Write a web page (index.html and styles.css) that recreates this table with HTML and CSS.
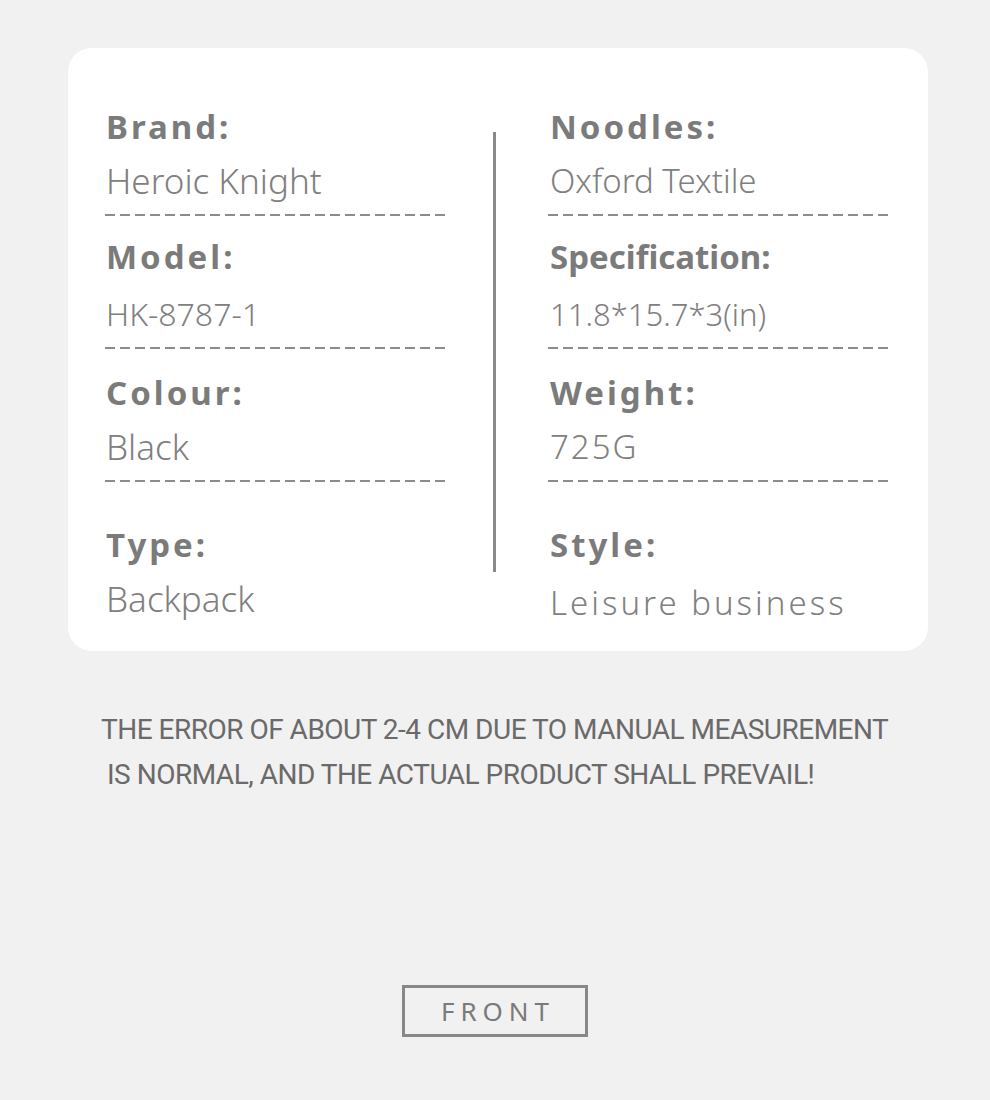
FILE: index.html
```html
<!DOCTYPE html>
<html lang="en">
<head>
    <meta charset="UTF-8">
    <meta name="viewport" content="width=device-width, initial-scale=1.0">
    <title>Product Parameters</title>
    <link rel="stylesheet" href="styles.css">
</head>
<body>
    <div class="page">
        <div class="card">
            <div class="col">
                <div class="item">
                    <div class="label spaced">Brand:</div>
                    <div class="value lg">Heroic Knight</div>
                    <div class="dash"></div>
                </div>
                <div class="item">
                    <div class="label spaced up">Model:</div>
                    <div class="value md">HK-8787-1</div>
                    <div class="dash"></div>
                </div>
                <div class="item">
                    <div class="label spaced">Colour:</div>
                    <div class="value lg">Black</div>
                    <div class="dash"></div>
                </div>
                <div class="item last">
                    <div class="label spaced">Type:</div>
                    <div class="value lg">Backpack</div>
                </div>
            </div>
            <div class="divider"></div>
            <div class="col">
                <div class="item">
                    <div class="label spaced">Noodles:</div>
                    <div class="value">Oxford Textile</div>
                    <div class="dash"></div>
                </div>
                <div class="item">
                    <div class="label up">Specification:</div>
                    <div class="value sm">11.8*15.7*3(in)</div>
                    <div class="dash"></div>
                </div>
                <div class="item">
                    <div class="label spaced">Weight:</div>
                    <div class="value spaced-light">725G</div>
                    <div class="dash"></div>
                </div>
                <div class="item last">
                    <div class="label spaced">Style:</div>
                    <div class="value spaced-wide low">Leisure business</div>
                </div>
            </div>
        </div>
        <p class="note">
            THE ERROR OF ABOUT 2-4 CM DUE TO MANUAL MEASUREMENT<br>
            <span class="indent">IS NORMAL, AND THE ACTUAL PRODUCT SHALL PREVAIL!</span>
        </p>
        <div class="front-wrap">
            <div class="front">FRONT</div>
        </div>
    </div>
</body>
</html>
```

FILE: styles.css
```css
body {
    margin: 0;
    padding: 0;
    background-color: #f1f1f1;
    font-family: "Noto Sans", "Open Sans", sans-serif;
    color: #7a7a7a;
}
.page {
    width: 990px;
    height: 1100px;
    padding-top: 48px;
    box-sizing: border-box;
}
.card {
    margin-left: 68px;
    width: 860px;
    height: 603px;
    box-sizing: border-box;
    background-color: #ffffff;
    border-radius: 24px;
    padding: 55px 40px 0 32px;
    display: grid;
    grid-template-columns: 345px 3px 344px;
    column-gap: 48px;
    align-items: start;
}
.divider {
    margin-top: 29px;
    height: 440px;
    background-color: #8a8a8a;
}
.item {
    padding-left: 6px;
}
.item.last {
    margin-top: 39px;
}
.label {
    font-size: 33px;
    font-weight: 700;
    line-height: 48px;
    color: #7b7b7b;
}
.label.up {
    margin-top: -3px;
    margin-bottom: 3px;
}
.spaced {
    letter-spacing: 3px;
}
.value {
    font-size: 33px;
    font-weight: 300;
    line-height: 60px;
    color: #808080;
    white-space: nowrap;
}
.value.lg {
    font-size: 35px;
}
.value.md {
    font-size: 32px;
}
.value.sm {
    font-size: 31px;
}
.value.low {
    margin-top: 4px;
}
.spaced-light {
    letter-spacing: 2px;
}
.spaced-wide {
    letter-spacing: 3px;
}
.dash {
    margin: 3px 0 20px -6px;
    height: 2px;
    background: repeating-linear-gradient(to left, #8c8c8c 0 10px, transparent 10px 15px);
}
.note {
    margin: 56px 0 0 101px;
    font-family: "Roboto", sans-serif;
    font-size: 28px;
    line-height: 45px;
    color: #6a6a6a;
    letter-spacing: -0.5px;
}
.indent {
    padding-left: 6px;
}
.front-wrap {
    margin-top: 188px;
    display: flex;
    justify-content: center;
}
.front {
    width: 186px;
    height: 52px;
    box-sizing: border-box;
    border: 3px solid #888888;
    display: flex;
    align-items: center;
    justify-content: center;
    font-size: 26px;
    letter-spacing: 6px;
    padding-left: 6px;
    color: #7a7a7a;
}
```
